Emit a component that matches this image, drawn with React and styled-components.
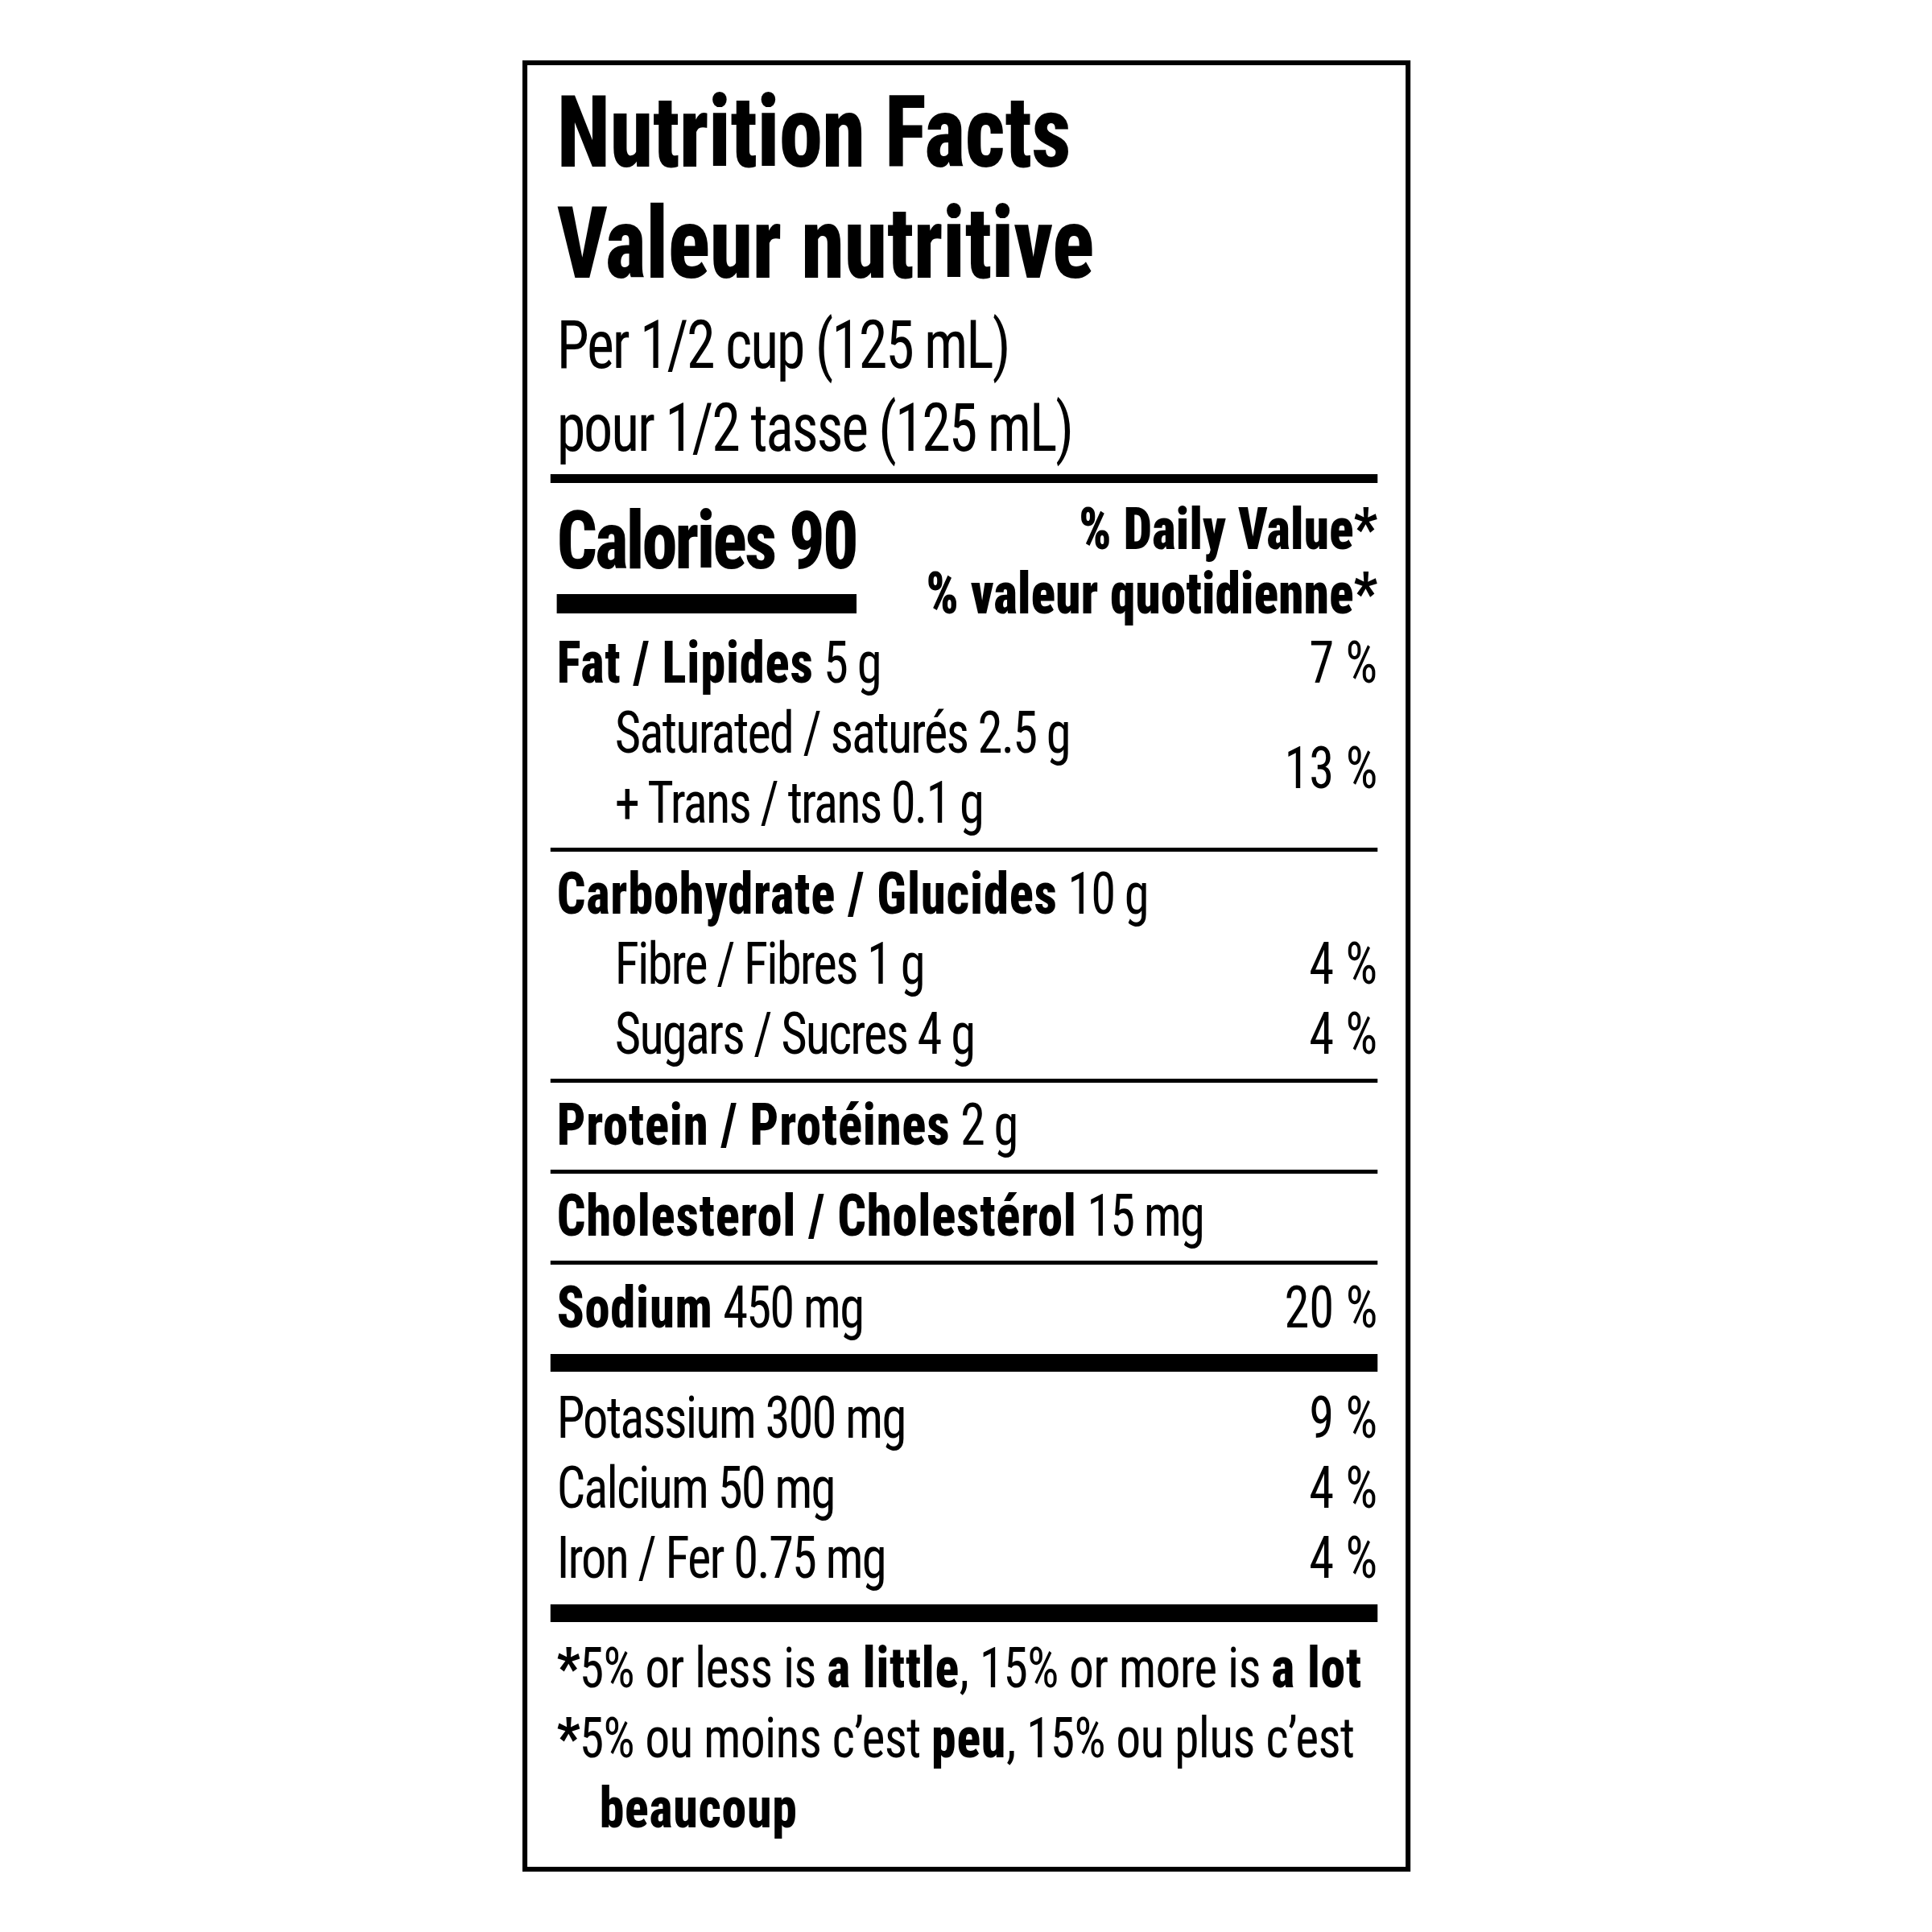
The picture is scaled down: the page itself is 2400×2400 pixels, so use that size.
import React from 'react';
import styled, { createGlobalStyle } from 'styled-components';

// label is drawn wider and squeezed back, the print font is narrower than Roboto Condensed
const SQUEEZE = 0.87;

const GlobalStyle = createGlobalStyle`
    body {
        margin: 0;
        background: #fff;
    }
`;

const Page = styled.div`
    width: 2400px;
    min-height: 2400px;
    box-sizing: border-box;
    padding: 75px 0 0 649px;
`;

const Label = styled.section`
    width: ${Math.round(1103 / SQUEEZE)}px;
    box-sizing: border-box;
    border-style: solid;
    border-color: #000;
    border-width: 6px 7px;
    padding: 15px 40px 30px 33px;
    transform: scaleX(${SQUEEZE});
    transform-origin: 0 0;
    font-family: Roboto, "Liberation Sans", sans-serif;
    font-stretch: 75%;
    color: #000;
`;

const Title = styled.h1`
    margin: 0;
    padding-left: 9px;
    font-size: 125px;
    line-height: 138px;
    font-weight: 850;
    letter-spacing: -0.005em;
    white-space: nowrap;
`;

const Serving = styled.div`
    margin-top: 5px;
    padding-left: 9px;
    font-size: 83px;
    line-height: 103px;
    font-weight: 450;
    letter-spacing: -0.03em;
    white-space: nowrap;
`;

const Rule = styled.div`
    height: ${(p) => p.$h}px;
    margin-top: ${(p) => p.$top || 0}px;
    background: #000;
`;

const CaloriesRow = styled.div`
    display: flex;
    justify-content: space-between;
    align-items: flex-start;
    padding: 17px 0 2px;
`;

const CaloriesBlock = styled.div`
    display: flex;
    flex-direction: column;
    margin-left: 9px;
`;

const Calories = styled.div`
    font-size: 101px;
    line-height: 110px;
    font-weight: 850;
    letter-spacing: -0.03em;
    white-space: nowrap;
`;

const CaloriesBar = styled.div`
    height: 24px;
    margin-top: 11px;
    background: #000;
`;

const DailyValue = styled.div`
    padding-top: 1px;
    text-align: right;
    font-size: 72px;
    line-height: 80px;
    font-weight: 900;
    letter-spacing: 0.005em;
    white-space: nowrap;
`;

const Section = styled.div`
    padding: ${(p) => p.$pad || '9px 0 12px'};
`;

const Row = styled.div`
    display: flex;
    justify-content: space-between;
    align-items: center;
    padding-left: ${(p) => (p.$sub ? 92 : 9)}px;
    font-size: 72px;
    line-height: 87px;
    font-weight: 450;
    letter-spacing: -0.03em;
    white-space: nowrap;
`;

const B = styled.span`
    font-weight: 850;
    letter-spacing: 0.012em;
`;

const Percent = styled.span`
    text-align: right;
    letter-spacing: 0;
`;

const Footnote = styled.div`
    padding-left: 70px;
    text-indent: -61px;
    font-size: 71px;
    line-height: 87px;
    font-weight: 450;
    letter-spacing: -0.012em;
`;

const FootLine = styled.div`
    white-space: nowrap;
`;

const Star = styled.span`
    font-weight: 900;
`;

const lower = [
    { name: 'Potassium', amount: '300 mg', dv: '9 %' },
    { name: 'Calcium', amount: '50 mg', dv: '4 %' },
    { name: 'Iron / Fer', amount: '0.75 mg', dv: '4 %' },
];

const App = () => {
    return (
        <>
            <GlobalStyle />
            <Page>
                <Label>
                    <Title>Nutrition Facts<br />Valeur nutritive</Title>
                    <Serving>Per 1/2 cup (125 mL)<br />pour 1/2 tasse (125 mL)</Serving>
                    <Rule $h={11} $top={6} />

                    <CaloriesRow>
                        <CaloriesBlock>
                            <Calories>Calories 90</Calories>
                            <CaloriesBar />
                        </CaloriesBlock>
                        <DailyValue>% Daily Value*<br />% valeur quotidienne*</DailyValue>
                    </CaloriesRow>

                    <Section $pad="0 0 12px">
                        <Row>
                            <span><B>Fat / Lipides</B> 5 g</span>
                            <Percent>7 %</Percent>
                        </Row>
                        <Row $sub>
                            <div>
                                <div>Saturated / saturés 2.5 g</div>
                                <div>+ Trans / trans 0.1 g</div>
                            </div>
                            <Percent>13 %</Percent>
                        </Row>
                    </Section>
                    <Rule $h={5} />

                    <Section>
                        <Row>
                            <span><B>Carbohydrate / Glucides</B> 10 g</span>
                        </Row>
                        <Row $sub>
                            <span>Fibre / Fibres 1 g</span>
                            <Percent>4 %</Percent>
                        </Row>
                        <Row $sub>
                            <span>Sugars / Sucres 4 g</span>
                            <Percent>4 %</Percent>
                        </Row>
                    </Section>
                    <Rule $h={5} />

                    <Section>
                        <Row>
                            <span><B>Protein / Protéines</B> 2 g</span>
                        </Row>
                    </Section>
                    <Rule $h={5} />

                    <Section>
                        <Row>
                            <span><B>Cholesterol / Cholestérol</B> 15 mg</span>
                        </Row>
                    </Section>
                    <Rule $h={5} />

                    <Section $pad="10px 0 14px">
                        <Row>
                            <span><B>Sodium</B> 450 mg</span>
                            <Percent>20 %</Percent>
                        </Row>
                    </Section>
                    <Rule $h={22} />

                    <Section $pad="14px 0 14px">
                        {lower.map((item) => (
                            <Row key={item.name}>
                                <span>{item.name} {item.amount}</span>
                                <Percent>{item.dv}</Percent>
                            </Row>
                        ))}
                    </Section>
                    <Rule $h={22} />

                    <Section $pad="13px 0 0">
                        <Footnote>
                            <FootLine><Star>*</Star>5% or less is <B>a little</B>, 15% or more is <B>a lot</B></FootLine>
                        </Footnote>
                        <Footnote>
                            <FootLine><Star>*</Star>5% ou moins c’est <B>peu</B>, 15% ou plus c’est</FootLine>
                            <B>beaucoup</B>
                        </Footnote>
                    </Section>
                </Label>
            </Page>
        </>
    );
};

export default App;
